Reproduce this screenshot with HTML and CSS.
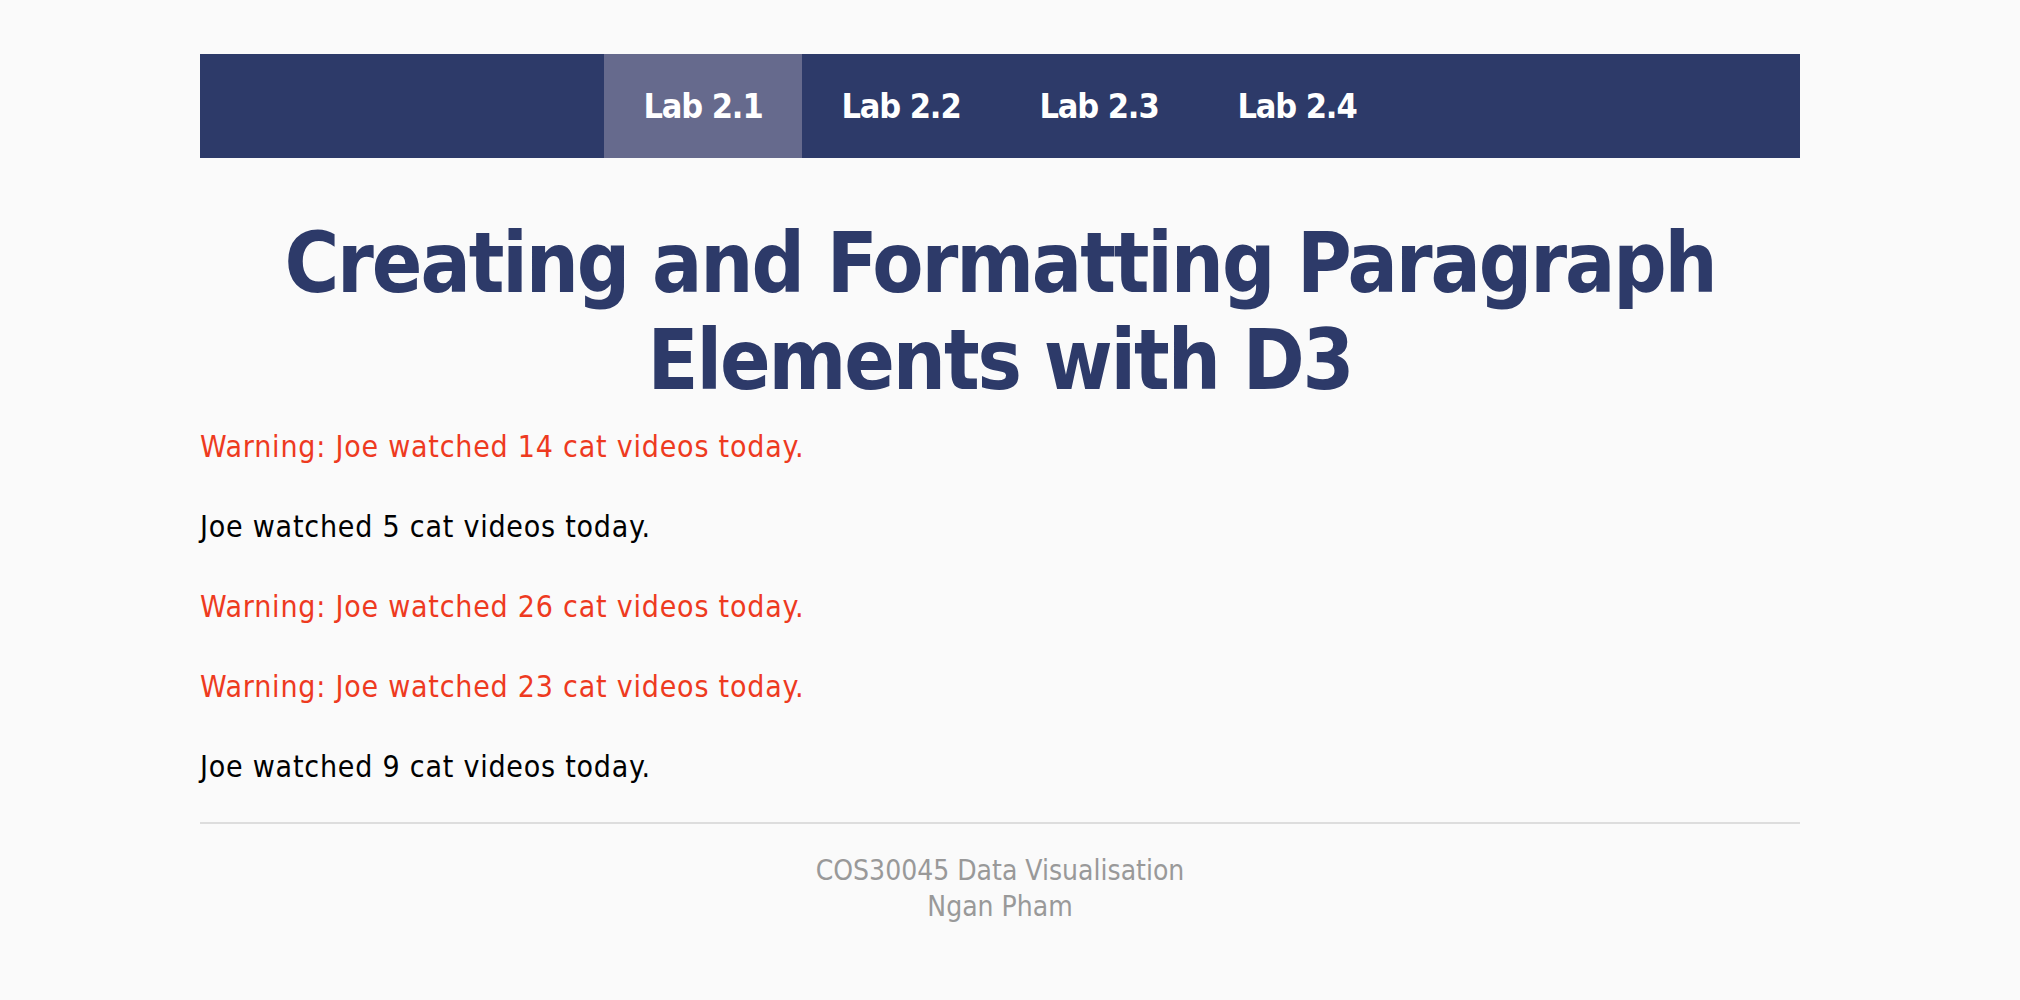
FILE: index.html
```html
<!DOCTYPE html>
<html lang="en">
<head>
<meta charset="utf-8">
<title>Lab 2.1</title>
<link rel="stylesheet" href="styles.css">
</head>
<body>
<div class="page">
  <nav class="menu">
    <a class="menu-item active" href="#">Lab 2.1</a>
    <a class="menu-item" href="#">Lab 2.2</a>
    <a class="menu-item" href="#">Lab 2.3</a>
    <a class="menu-item" href="#">Lab 2.4</a>
  </nav>
  <h1 class="title">Creating and Formatting Paragraph Elements with D3</h1>
  <div class="messages">
    <p class="msg warn">Warning: Joe watched 14 cat videos today.</p>
    <p class="msg">Joe watched 5 cat videos today.</p>
    <p class="msg warn">Warning: Joe watched 26 cat videos today.</p>
    <p class="msg warn">Warning: Joe watched 23 cat videos today.</p>
    <p class="msg">Joe watched 9 cat videos today.</p>
  </div>
  <hr class="rule">
  <footer class="footer">
    <div>COS30045 Data Visualisation</div>
    <div>Ngan Pham</div>
  </footer>
</div>
</body>
</html>
```
FILE: styles.css
```css
html, body {
  margin: 0;
  padding: 0;
  background: #fafafa;
}
body {
  font-family: "DejaVu Sans Condensed", "DejaVu Sans", sans-serif;
}
.page {
  width: 1600px;
  margin: 54px 0 0 200px;
}
.menu {
  display: flex;
  justify-content: center;
  height: 104px;
  background: #2d3a69;
}
.menu-item {
  display: block;
  width: 198px;
  line-height: 104px;
  text-align: center;
  color: #ffffff;
  text-decoration: none;
  font-weight: bold;
  font-size: 34px;
  letter-spacing: -1.1px;
}
.menu-item.active {
  background: #666a8d;
}
.title {
  margin: 57px 0 20px;
  text-align: center;
  color: #2d3a69;
  font-size: 83px;
  line-height: 97px;
  font-weight: bold;
  letter-spacing: -2.1px;
}
.messages {
  display: flex;
  flex-direction: column;
  gap: 44px;
}
.msg {
  margin: 0;
  font-size: 30px;
  line-height: 36px;
  letter-spacing: 0.78px;
  color: #000000;
}
.msg.warn {
  color: #ee3a1f;
}
.rule {
  margin: 37px 0 0;
  border: 0;
  height: 2px;
  background: #dddddd;
}
.footer {
  margin-top: 29px;
  text-align: center;
  color: #999999;
  font-size: 28px;
  line-height: 36px;
}
```
